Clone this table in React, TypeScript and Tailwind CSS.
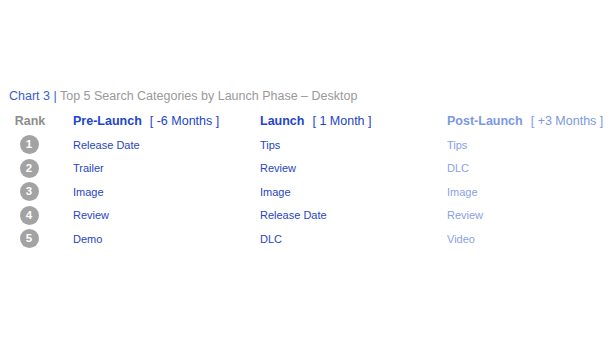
import React from 'react'

const rows = [
  ['Release Date', 'Tips', 'Tips'],
  ['Trailer', 'Review', 'DLC'],
  ['Image', 'Image', 'Image'],
  ['Review', 'Release Date', 'Review'],
  ['Demo', 'DLC', 'Video'],
]

function Head({ name, range, light }: { name: string; range: string; light?: boolean }) {
  return (
    <div className={`flex items-center ${light ? 'text-[#7d98e2]' : 'text-[#2145c9]'}`}>
      <span className="font-bold">{name}</span>
      <span className="ml-[8px] whitespace-pre">{range}</span>
    </div>
  )
}

export default function App() {
  return (
    <div
      className="w-[610px] h-[343px] bg-white pt-[87px] pl-[9px]"
      style={{ fontFamily: '"Liberation Sans", Arial, sans-serif' }}
    >
      <div className="text-[12.5px] leading-[18px] text-[#999999]">
        <span className="text-[#3a5ccf]">Chart 3 |</span> Top 5 Search Categories by Launch Phase – Desktop
      </div>

      <div className="mt-[4px] grid grid-cols-[64px_187px_187px_1fr] text-[12.5px] h-[24px] items-center">
        <div className="w-[42px] text-center font-bold text-[#8c8c8c]">Rank</div>
        <Head name="Pre-Launch" range="[ -6 Months ]" />
        <Head name="Launch" range="[ 1 Month ]" />
        <Head name="Post-Launch" range="[ +3 Months ]" light />
      </div>

      {rows.map((r, i) => (
        <div key={i} className="grid grid-cols-[64px_187px_187px_1fr] h-[23.5px] items-center text-[11px]">
          <div className="w-[40px] flex justify-center">
            <span className="w-[19px] h-[19px] rounded-full bg-[#a3a3a3] text-white font-bold text-[11.5px] flex items-center justify-center">
              {i + 1}
            </span>
          </div>
          <div className="text-[#2846c2]">{r[0]}</div>
          <div className="text-[#2846c2]">{r[1]}</div>
          <div className="text-[#8aa0e4]">{r[2]}</div>
        </div>
      ))}
    </div>
  )
}
